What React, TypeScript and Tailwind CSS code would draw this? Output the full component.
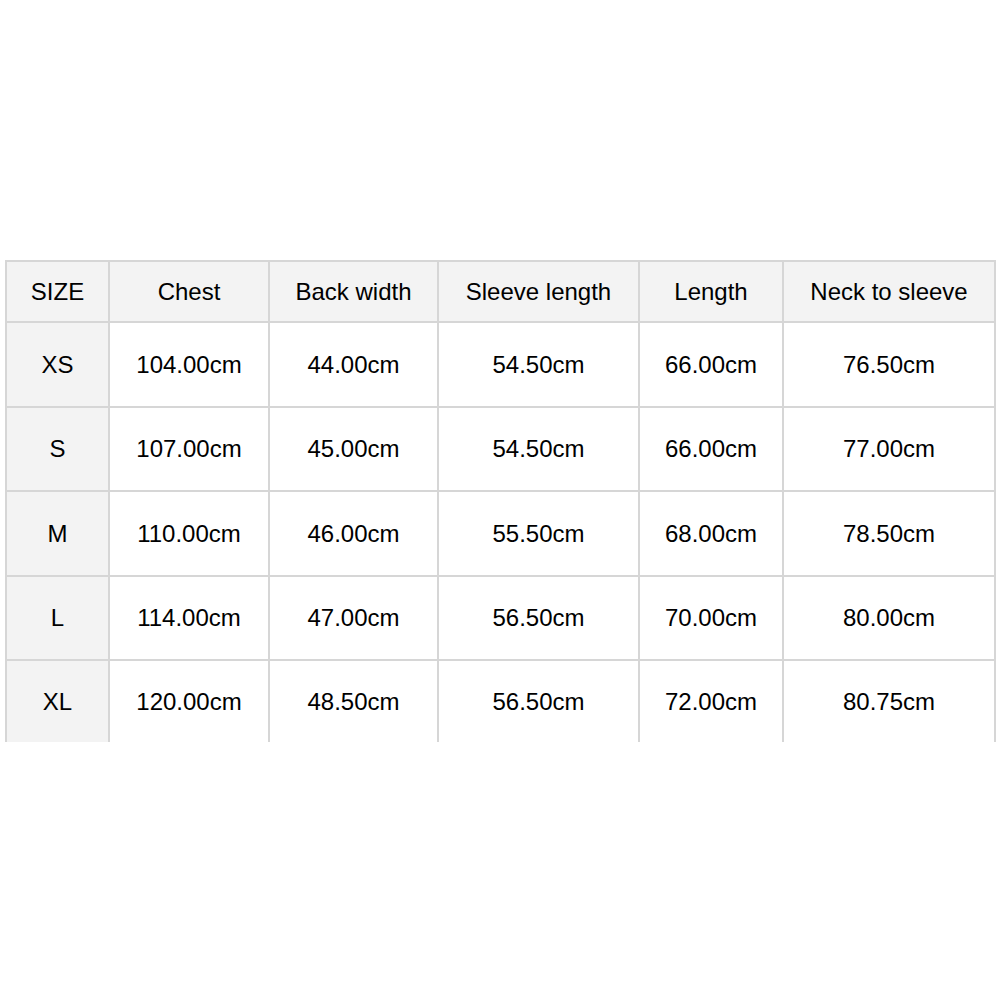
const COLS = 'grid-cols-[101px_158px_167px_199px_142px_210px]';

const headers = ['SIZE', 'Chest', 'Back width', 'Sleeve length', 'Length', 'Neck to sleeve'];

const rows: { h: string; cells: string[] }[] = [
  { h: 'h-[83px]', cells: ['XS', '104.00cm', '44.00cm', '54.50cm', '66.00cm', '76.50cm'] },
  { h: 'h-[82px]', cells: ['S', '107.00cm', '45.00cm', '54.50cm', '66.00cm', '77.00cm'] },
  { h: 'h-[83px]', cells: ['M', '110.00cm', '46.00cm', '55.50cm', '68.00cm', '78.50cm'] },
  { h: 'h-[82px]', cells: ['L', '114.00cm', '47.00cm', '56.50cm', '70.00cm', '80.00cm'] },
  { h: 'h-[81px]', cells: ['XL', '120.00cm', '48.50cm', '56.50cm', '72.00cm', '80.75cm'] },
];

export default function App() {
  return (
    <div className="w-[1000px] h-[1000px] bg-white pt-[260px] pl-[5px] font-['Liberation_Sans',Arial,sans-serif] text-[24px] text-black">
      <div className={`grid ${COLS} gap-[2px] w-fit bg-[#d6d6d6] pt-[2px] px-[2px]`}>
        {headers.map((t) => (
          <div key={t} className="h-[59px] bg-[#f3f3f3] flex items-center justify-center">
            {t}
          </div>
        ))}
        {rows.map((r) =>
          r.cells.map((c, i) => (
            <div
              key={r.cells[0] + i}
              className={`${r.h} flex items-center justify-center ${i === 0 ? 'bg-[#f3f3f3]' : 'bg-white'}`}
            >
              {c}
            </div>
          ))
        )}
      </div>
    </div>
  );
}
